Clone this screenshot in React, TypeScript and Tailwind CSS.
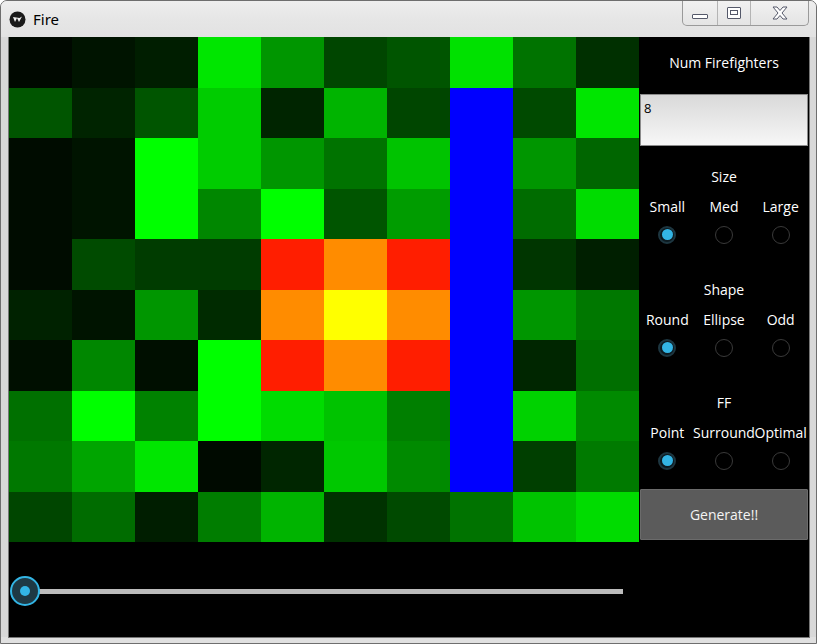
const cells: string[][] = [
  ["#000800", "#001400", "#001e00", "#00e600", "#009600", "#004600", "#005500", "#00e100", "#007300", "#003000"],
  ["#005500", "#002400", "#005500", "#00cc00", "#002500", "#00b400", "#004600", "#0000ff", "#004a00", "#00e600"],
  ["#000c00", "#001400", "#00ff00", "#00cc00", "#009600", "#007300", "#00c300", "#0000ff", "#009600", "#006600"],
  ["#000c00", "#001400", "#00ff00", "#008700", "#00ff00", "#005500", "#009c00", "#0000ff", "#006c00", "#00dc00"],
  ["#000c00", "#004b00", "#003c00", "#003c00", "#ff1e00", "#ff8c00", "#ff1e00", "#0000ff", "#003600", "#001f00"],
  ["#002200", "#001400", "#009600", "#002b00", "#ff8c00", "#ffff00", "#ff8c00", "#0000ff", "#009600", "#007800"],
  ["#000f00", "#008700", "#000f00", "#00ff00", "#ff1e00", "#ff8c00", "#ff1e00", "#0000ff", "#002600", "#006f00"],
  ["#007000", "#00ff00", "#008200", "#00ff00", "#00dc00", "#00c300", "#007f00", "#0000ff", "#00d200", "#008a00"],
  ["#007800", "#00a500", "#00e600", "#000a00", "#002600", "#00c800", "#008a00", "#0000ff", "#003f00", "#007a00"],
  ["#004600", "#006c00", "#001e00", "#007d00", "#00b400", "#003200", "#004a00", "#007300", "#00c300", "#00dc00"],
];

const groups = [
  { title: "Size", options: ["Small", "Med", "Large"] },
  { title: "Shape", options: ["Round", "Ellipse", "Odd"] },
  { title: "FF", options: ["Point", "Surround", "Optimal"] },
];

function Radio({ checked }: { checked: boolean }) {
  return checked ? (
    <div className="w-[18px] h-[18px] rounded-full border-2 border-[#1d3640] bg-[#0c1a20] flex items-center justify-center">
      <div className="w-[11px] h-[11px] rounded-full bg-[#33b5e5]" />
    </div>
  ) : (
    <div className="w-[18px] h-[18px] rounded-full border-[1.5px] border-[#3a3a3a]" />
  );
}

function TitleBar() {
  return (
    <div className="h-[36px] flex relative bg-gradient-to-b from-[#eeeeee] via-[#e6e6e6] to-[#e2e2e2]">
      <div className="flex items-center gap-[7px] pl-[8px] h-[36px] pt-px">
        <svg width="17" height="17" viewBox="0 0 17 17">
          <circle cx="8.5" cy="8.5" r="8" fill="#1a1a1a" />
          <path d="M4 6 L6 11 L8 7 L10 11 L13 5.5 L10.5 7 Z" fill="#f0f0f0" />
        </svg>
        <span className="text-[15px] text-black" style={{ fontFamily: '"Noto Sans", sans-serif' }}>Fire</span>
      </div>
      <div className="absolute right-[7px] top-[-1px] h-[26px] flex border border-t-0 border-[#9a9a9a] rounded-b-[5px] bg-gradient-to-b from-[#f2f2f2] to-[#e4e4e4]">
        <div className="w-[35px] flex items-center justify-center border-r border-[#b4b4b4]">
          <div className="w-[16px] h-[5px] border border-[#55596a] rounded-[1px] mt-[7px] bg-white" />
        </div>
        <div className="w-[33px] flex items-center justify-center border-r border-[#b4b4b4]">
          <div className="w-[14px] h-[12px] border border-[#55596a] rounded-[1px] flex items-center justify-center bg-white">
            <div className="w-[8px] h-[5px] border border-[#55596a]" />
          </div>
        </div>
        <div className="w-[57px] flex items-center justify-center">
          <svg width="16" height="14" viewBox="0 0 16 14">
            <path d="M1 1 H5 L8 4.5 L11 1 H15 L10 7 L15 13 H11 L8 9.5 L5 13 H1 L6 7 Z" fill="#ffffff" stroke="#55596a" strokeWidth="1" strokeLinejoin="round" />
          </svg>
        </div>
      </div>
    </div>
  );
}

function Panel() {
  return (
    <div className="w-[170px] h-[505px] bg-black text-white flex flex-col" style={{ fontFamily: '"Open Sans", "Noto Sans", sans-serif' }}>
      <div className="h-[57px] flex items-center justify-center text-[14px] pb-[6px]">Num Firefighters</div>
      <div className="h-[52px] mx-px border border-[#8c8c8c] bg-gradient-to-b from-[#d9d9d9] to-[#f7f7f7] text-black text-[13px] px-[3px] pt-[4px]">
        8
      </div>
      <div className="h-[15px]" />
      {groups.map((g, gi) => (
        <div key={g.title} className="flex flex-col">
          <div className="h-[30px] flex items-center justify-center text-[14px]">{g.title}</div>
          <div className="grid grid-cols-3 h-[30px] text-[14px]">
            {g.options.map((o) => (
              <div key={o} className="flex items-center justify-center whitespace-nowrap">{o}</div>
            ))}
          </div>
          <div className="grid grid-cols-3 h-[27px]">
            {g.options.map((o, i) => (
              <div key={o} className="flex items-center justify-center">
                <Radio checked={i === 0} />
              </div>
            ))}
          </div>
          {gi < 2 && <div className="h-[26px]" />}
        </div>
      ))}
      <div className="h-[15px]" />
      <div className="h-[51px] mx-px bg-[#5b5b5b] border border-[#6b6b6b] rounded-[1px] flex items-center justify-center text-[14px] text-[#f4f4f4]">
        Generate!!
      </div>
    </div>
  );
}

export default function App() {
  return (
    <div className="w-[817px] h-[644px] flex flex-col bg-[#e0e0e0] border border-[#6e6e6e] rounded-t-[7px] overflow-hidden">
      <TitleBar />
      <div className="flex px-[8px] bg-gradient-to-r from-[#d8d8d8] via-[#e8e8e8] to-[#d8d8d8]">
        <div className="w-[800px] h-[600px] bg-black flex flex-col outline outline-1 outline-[#777777]">
          <div className="flex">
            <div className="w-[630px] h-[505px] grid grid-cols-10 grid-rows-10">
              {cells.flat().map((c, i) => (
                <div key={i} style={{ backgroundColor: c }} />
              ))}
            </div>
            <Panel />
          </div>
          <div className="flex-1 relative">
            <div className="absolute left-[16px] top-[47px] w-[598px] h-[5px] bg-[#bcbcbc]" />
            <div className="absolute left-[1px] top-[34px] w-[30px] h-[30px] rounded-full border-2 border-[#33b5e5] bg-[#1e3944] flex items-center justify-center">
              <div className="w-[10px] h-[10px] rounded-full bg-[#33b5e5]" />
            </div>
          </div>
        </div>
      </div>
    </div>
  );
}
